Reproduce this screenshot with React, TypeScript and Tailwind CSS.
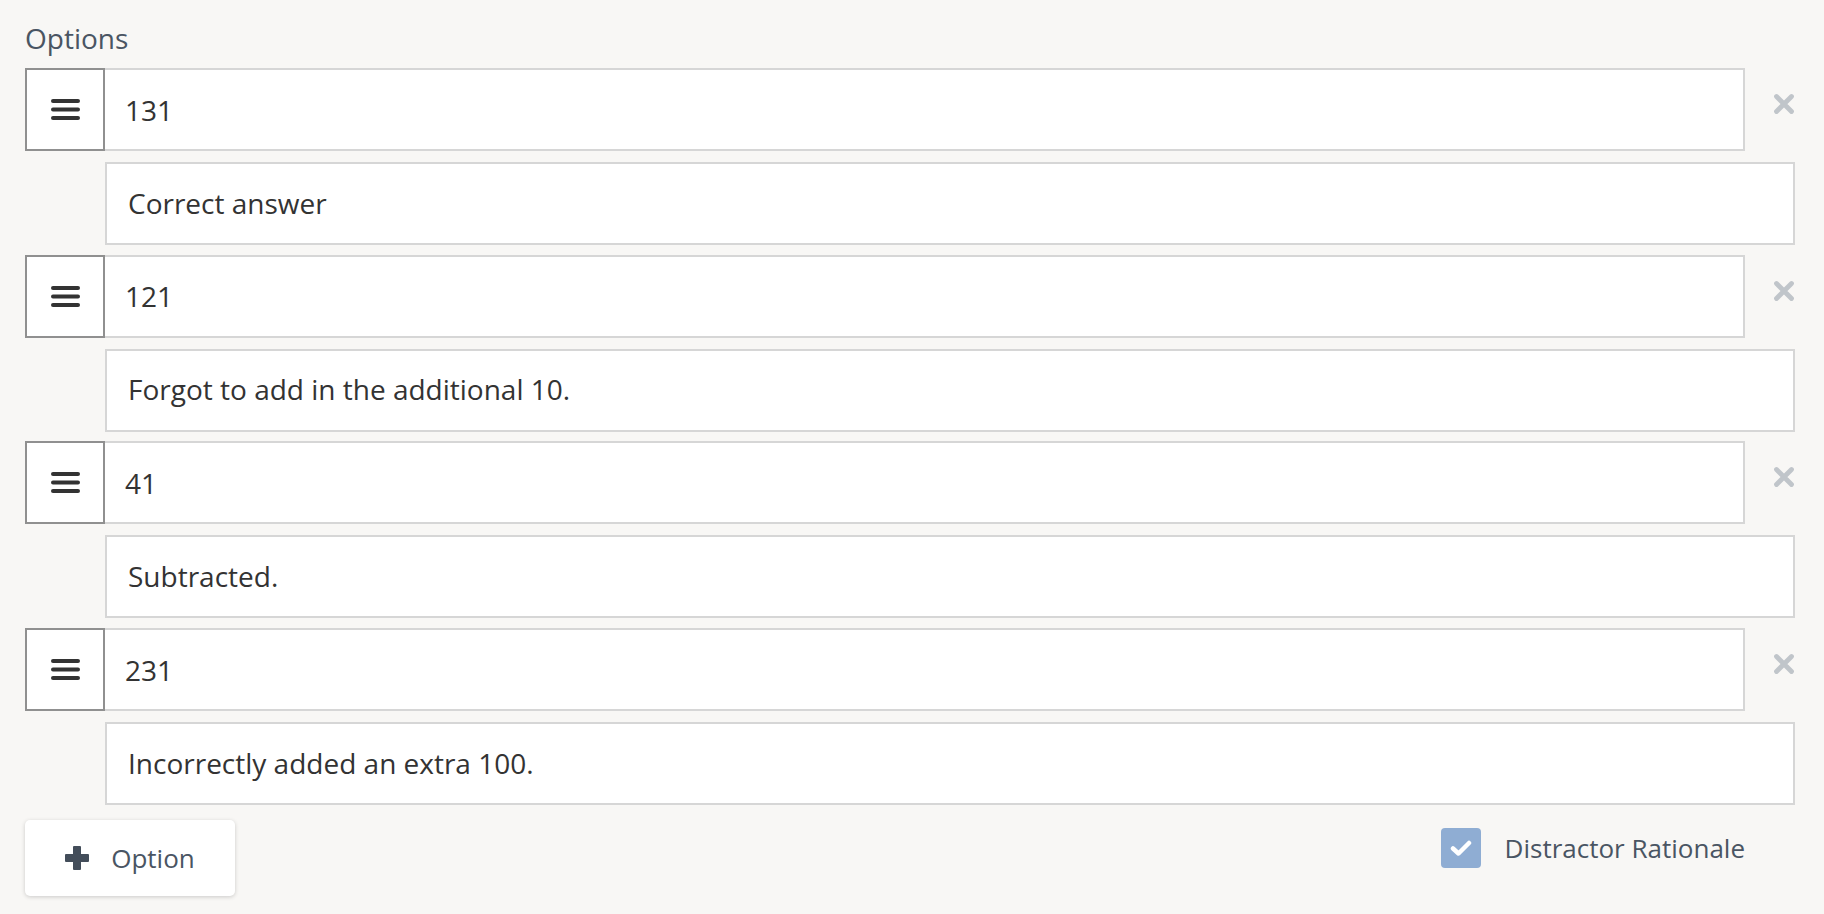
const options = [
    { value: '131', rationale: 'Correct answer' },
    { value: '121', rationale: 'Forgot to add in the additional 10.' },
    { value: '41', rationale: 'Subtracted.' },
    { value: '231', rationale: 'Incorrectly added an extra 100.' },
];

const DragIcon = () => (
    <svg width="29" height="21" viewBox="0 0 29 21" fill="#333333">
        <rect x="0" y="0" width="29" height="4" rx="2" />
        <rect x="0" y="8.5" width="29" height="4" rx="2" />
        <rect x="0" y="17" width="29" height="4" rx="2" />
    </svg>
);

const CloseIcon = () => (
    <svg width="22" height="22" viewBox="0 0 22 22" stroke="#c0c5ca" strokeWidth="4.8" strokeLinecap="round">
        <path d="M3.5 3.5 L18.5 18.5 M18.5 3.5 L3.5 18.5" />
    </svg>
);

const OptionRow = ({ value, rationale }: { value: string; rationale: string }) => (
    <div className="mb-[9.7px]">
        <div className="flex">
            <div className="flex h-[83px] w-[80px] shrink-0 items-center justify-center border-2 border-[#909090] bg-white">
                <DragIcon />
            </div>
            <div className="flex h-[83px] flex-1 items-center border-2 border-l-0 border-[#d6d6d6] bg-white pl-[20px] text-[28px] text-[#333333]">
                {value}
            </div>
            <div className="flex w-[50px] shrink-0 justify-end pt-[25px]">
                <CloseIcon />
            </div>
        </div>
        <div className="mt-[11px] ml-[80px] flex h-[83px] items-center border-2 border-[#d6d6d6] bg-white pb-[2px] pl-[21px] text-[28px] text-[#333333]">
            {rationale}
        </div>
    </div>
);

export default function App() {
    return (
        <div className="min-h-screen bg-[#f8f7f5] pt-[17px] pr-[29px] pl-[25px] font-['Open_Sans',sans-serif]">
            <div className="mb-[9px] text-[28px] leading-[42px] text-[#4a5563]">Options</div>
            {options.map((item) => (
                <OptionRow key={item.value} value={item.value} rationale={item.rationale} />
            ))}
            <div className="mt-[15px] flex items-start justify-between pr-[50px]">
                <button className="flex h-[76px] w-[210px] items-center justify-center gap-[22px] rounded-[5px] bg-white text-[26px] text-[#4a5563] shadow-[0_1px_4px_rgba(0,0,0,0.18)]">
                    <svg width="24" height="24" viewBox="0 0 24 24" fill="#434d5a">
                        <rect x="8" y="0" width="8" height="24" rx="1" />
                        <rect x="0" y="8" width="24" height="8" rx="1" />
                    </svg>
                    <span>Option</span>
                </button>
                <label className="mt-[8px] flex items-center gap-[24px] text-[26px] text-[#4a5563]">
                    <span className="flex h-[40px] w-[40px] items-center justify-center rounded-[4px] bg-[#8fadd3]">
                        <svg width="22" height="16" viewBox="0 0 22 16" fill="none" stroke="white" strokeWidth="4.5" strokeLinecap="round" strokeLinejoin="round">
                            <path d="M3 8.5 L8.5 13.5 L19 3" />
                        </svg>
                    </span>
                    <span>Distractor Rationale</span>
                </label>
            </div>
        </div>
    );
}
